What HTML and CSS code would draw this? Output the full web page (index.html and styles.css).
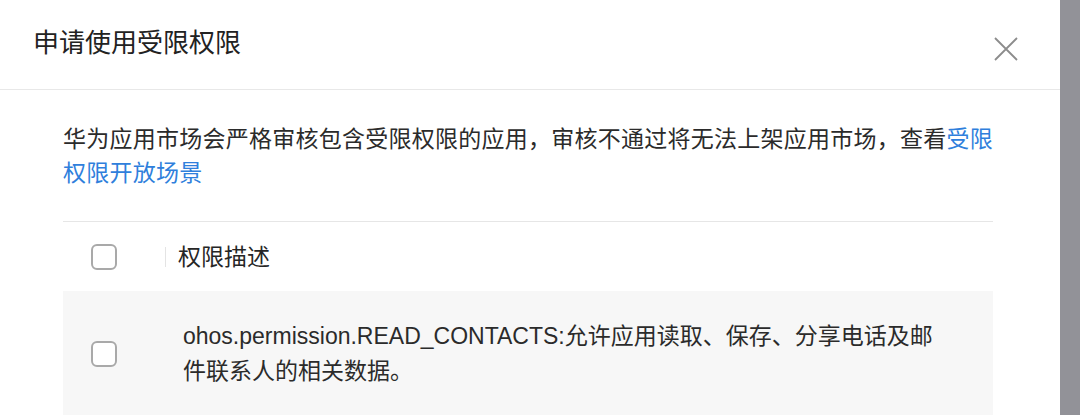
FILE: index.html
```html
<!DOCTYPE html>
<html lang="zh-CN">
<head>
  <meta charset="UTF-8" />
  <meta name="viewport" content="width=device-width, initial-scale=1.0" />
  <title>申请使用受限权限</title>
  <link rel="stylesheet" href="styles.css">
</head>
<body>

  <div class="dialog">
    <div class="dialog-header">
      <h1 class="dialog-title">申请使用受限权限</h1>
      <button class="dialog-close" type="button" aria-label="关闭">
        <svg width="24" height="24" viewBox="0 0 24 24">
          <path d="M1 1 L23 23 M23 1 L1 23" stroke="#8c8c8c" stroke-width="1.8" fill="none" />
        </svg>
      </button>
    </div>

    <div class="dialog-body">
      <p class="notice">
        华为应用市场会严格审核包含受限权限的应用，审核不通过将无法上架应用市场，查看<a href="#">受限权限开放场景</a>
      </p>

      <div class="perm-table">
        <div class="perm-head">
          <div class="cell-check"><span class="checkbox"></span></div>
          <div class="cell-desc">权限描述</div>
        </div>
        <div class="perm-row">
          <div class="cell-check"><span class="checkbox"></span></div>
          <div class="cell-desc">ohos.permission.READ_CONTACTS:允许应用读取、保存、分享电话及邮件联系人的相关数据。</div>
        </div>
      </div>
    </div>
  </div>

</body>
</html>
```

FILE: styles.css
```css
body {
  margin: 0;
  background-color: #929298;
  font-family: "Liberation Sans", "Noto Sans CJK SC", sans-serif;
  color: #262626;
}

.dialog {
  width: 1060px;
  height: 415px;
  background-color: #fff;
  overflow: hidden;
}

.dialog-header {
  display: flex;
  align-items: center;
  justify-content: space-between;
  height: 90px;
  padding: 0 42px 0 33px;
  border-bottom: 1px solid #e8e8e8;
  box-sizing: border-box;
}

.dialog-title {
  margin: 0 0 8px;
  font-size: 26px;
  font-weight: normal;
  color: #222;
}

.dialog-close {
  display: flex;
  padding: 0;
  margin-top: 8px;
  border: none;
  background: none;
  cursor: pointer;
}

.dialog-body {
  padding: 32px 67px 0 63px;
}

.notice {
  margin: 0;
  padding-bottom: 31px;
  font-size: 23px;
  line-height: 34px;
  letter-spacing: 0.25px;
  color: #2b2b2b;
  border-bottom: 1px solid #e6e6e6;
}

.notice a {
  color: #2f7fdc;
  text-decoration: none;
}

.perm-head,
.perm-row {
  display: grid;
  grid-template-columns: 102px 1fr;
  align-items: center;
  font-size: 23px;
}

.perm-head {
  height: 69px;
}

.perm-head .cell-desc {
  border-left: 1px solid #e4e4e4;
  padding-left: 12px;
  line-height: 20px;
}

.perm-row {
  padding: 28px 43px 28px 0;
  background-color: #f7f7f7;
  line-height: 35px;
}

.perm-row .cell-desc {
  padding-left: 18px;
  color: #2b2b2b;
}

.cell-check {
  padding-left: 28px;
  display: flex;
}

.checkbox {
  width: 22px;
  height: 22px;
  border: 2px solid #a9a9a9;
  border-radius: 6px;
  background-color: #fff;
}
```
